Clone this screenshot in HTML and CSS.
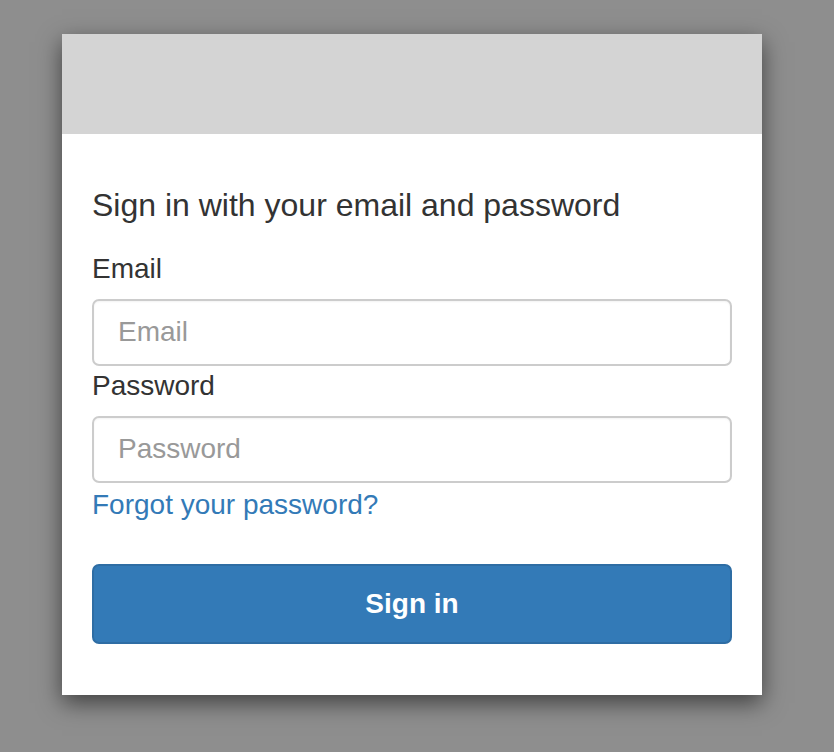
FILE: index.html
```html
<!DOCTYPE html>
<html lang="en">
<head>
  <meta charset="UTF-8" />
  <meta name="viewport" content="width=device-width, initial-scale=1.0"/>
  <title>Sign in</title>
  <link rel="stylesheet" href="styles.css">
</head>
<body>

  <!-- Sign in card -->
  <div class="modal">
    <div class="modal-header"></div>

    <div class="modal-body">
      <h2 class="title">Sign in with your email and password</h2>
      <form onsubmit="event.preventDefault();">
        <label for="email">Email</label>
        <input id="email" type="email" name="email" placeholder="Email" />
        <label for="password">Password</label>
        <input id="password" type="password" name="password" placeholder="Password" />
        <a class="forgot" href="#">Forgot your password?</a>
        <button type="submit">Sign in</button>
      </form>
    </div>
  </div>

</body>
</html>
```

FILE: styles.css
```css
/* General styles */
body {
  font-family: "Liberation Sans", Arial, sans-serif;
  margin: 0; padding: 34px 0 58px 62px;
  background-color: #8e8e8e;
  color: #333;
}

/* Card */
.modal {
  width: 700px;
  background: white;
  box-shadow: 0 8px 22px rgba(0,0,0,0.55);
}

.modal-header {
  height: 100px;
  background-color: #d4d4d4;
}

.modal-body {
  padding: 49px 30px 51px;
}

.title {
  margin: 0 0 21px;
  font-size: 32px;
  font-weight: normal;
  line-height: 1.4;
}

/* Form */
form {
  display: flex;
  flex-direction: column;
}

label {
  font-size: 28px;
  line-height: 40px;
  margin-bottom: 10px;
}

input {
  box-sizing: border-box;
  height: 67px;
  padding: 0 24px;
  border: 2px solid #ccc;
  border-radius: 7px;
  font-family: inherit;
  font-size: 28px;
  color: #333;
  box-shadow: inset 0 1px 2px rgba(0,0,0,0.05);
}

input::placeholder {
  color: #999;
}

.forgot {
  font-size: 28px;
  line-height: 40px;
  padding-top: 2px;
  color: #337ab7;
  text-decoration: none;
  align-self: flex-start;
}

button {
  margin-top: 39px;
  height: 80px;
  background-color: #337ab7;
  border: 2px solid #2e6da4;
  border-radius: 7px;
  color: white;
  font-family: inherit;
  font-size: 28px;
  font-weight: bold;
  cursor: pointer;
}
```
